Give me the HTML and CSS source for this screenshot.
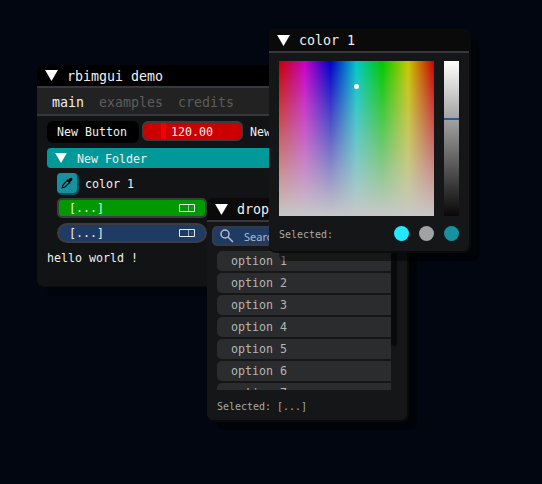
FILE: index.html
```html
<!DOCTYPE html>
<html lang="en">
<head>
<meta charset="utf-8">
<title>rbimgui demo</title>
<link rel="stylesheet" href="styles.css">
</head>
<body>
<main class="desktop">
  <section class="window demo">
    <header class="title"><svg class="arrow" viewBox="0 0 14 12"><path d="M0 0H14L7 12Z"/></svg><span>rbimgui demo</span></header>
    <nav class="tabs"><span class="active">main</span><span>examples</span><span>credits</span></nav>
    <div class="content">
      <div class="controls">
        <div class="button">New Button</div>
        <div class="slider"><i class="grip"></i><span>120.00</span></div>
        <span class="label">New</span>
      </div>
      <div class="folder"><svg class="arrow" viewBox="0 0 14 12"><path d="M0 0H14L7 12Z"/></svg><span>New Folder</span></div>
      <div class="items">
        <div class="color-row">
          <div class="swatch"><svg viewBox="0 0 12 12"><path d="M1.2 10.8 2 8 6.4 3.4 8.6 5.6 4 10Z" fill="none" stroke="#000" stroke-width="1.1"/><path d="M5.4 3.3 6.3 2.5 7 3.1 8.7 1.3Q10 .3 11.1 1.1 11.9 2.2 10.8 3.5L8.9 5.2 9.5 5.9 8.7 6.7Z"/></svg></div>
          <span>color 1</span>
        </div>
        <div class="combo green"><span>[...]</span><svg viewBox="0 0 16 8"><path d="M.5 .5H15.5V7.5H.5Z"/><path class="split" d="M9.5 1V7"/><path class="dot" d="M12.5 4H13.5"/></svg></div>
        <div class="combo blue"><span>[...]</span><svg viewBox="0 0 16 8"><path d="M.5 .5H15.5V7.5H.5Z"/><path class="split" d="M9.5 1V7"/><path class="dot" d="M12.5 4H13.5"/></svg></div>
      </div>
      <div class="hello">hello world !</div>
    </div>
  </section>

  <section class="window drop">
    <header class="title"><svg class="arrow" viewBox="0 0 14 12"><path d="M0 0H14L7 12Z"/></svg><span>drop</span></header>
    <div class="search"><svg viewBox="0 0 14 14"><circle cx="5" cy="5" r="4"/><path d="M8 8 13 13"/></svg><span>Search</span></div>
    <div class="list">
      <div class="options">
        <div class="option">option 1</div>
        <div class="option">option 2</div>
        <div class="option">option 3</div>
        <div class="option">option 4</div>
        <div class="option">option 5</div>
        <div class="option">option 6</div>
        <div class="option">option 7</div>
      </div>
      <div class="scroll"></div>
    </div>
    <div class="selected">Selected: [...]</div>
  </section>

  <section class="window picker">
    <header class="title"><svg class="arrow" viewBox="0 0 14 12"><path d="M0 0H14L7 12Z"/></svg><span>color 1</span></header>
    <div class="fields">
      <div class="spectrum"><i class="point"></i></div>
      <div class="value"><i class="mark"></i></div>
    </div>
    <footer class="result"><span>Selected:</span><div class="dots"><i class="cyan"></i><i class="gray"></i><i class="teal"></i></div></footer>
  </section>
</main>
</body>
</html>
```
FILE: styles.css
```css
* { box-sizing: border-box; }
body {
  margin: 0;
  background: #010611;
  color: #f0f0f0;
  font: 11.63px/20px "DejaVu Sans Mono", monospace;
}
.desktop { position: relative; width: 542px; height: 484px; overflow: hidden; white-space: nowrap; }
.window {
  position: absolute;
  width: 200px;
  height: 222px;
  border-radius: 6px;
  background: #151617;
  box-shadow: 1px 1px 0 1px rgba(10, 11, 11, .9), 10px 10px 0 rgba(0, 0, 0, .48);
}
.demo { left: 37px; top: 65px; width: 300px; height: 221px; background: #121314; box-shadow: 0 1px 0 #0b0c0d, 10px 10px 0 rgba(0, 0, 0, .3); }
.drop { left: 207px; top: 198px; }
.picker { left: 269px; top: 29px; }
.title {
  display: flex;
  align-items: center;
  gap: 9px;
  height: 24px;
  padding-left: 8px;
  border-bottom: 2px solid #37373d;
  border-radius: 6px 6px 0 0;
  background: #0a0a0a;
  font-size: 13.29px;
}
.title span { padding-top: 2px; }
.demo .title { height: 23px; background: #000; }
.arrow { width: 13px; height: 11px; fill: #fff; flex: none; }
.tabs {
  display: flex;
  align-items: center;
  gap: 15px;
  height: 28px;
  padding: 3px 0 0 15px;
  border-bottom: 2px solid #37373d;
  background: #222223;
  color: #5d5d5d;
  font-size: 13.29px;
}
.tabs .active { color: #f0f0f0; }
.content { padding: 5px 0 0 10px; }
.controls { display: flex; gap: 2px; height: 22px; }
.button { width: 92px; height: 22px; padding-left: 10px; border-radius: 6px; background: #000; line-height: 22px; }
.slider { display: flex; width: 101px; height: 20px; margin-left: 1px; border: 2px solid #3c3c42; border-radius: 6px; background: #cc0000; line-height: 19px; }
.grip { width: 5px; height: 16px; margin-left: 17px; background: #f40000; }
.slider span { margin-left: 5px; }
.label { margin-left: 5px; line-height: 22px; }
.folder { display: flex; align-items: center; gap: 10px; height: 20px; margin-top: 5px; padding: 1px 0 0 8px; border-radius: 4px; background: #009999; }
.folder .arrow { width: 12px; height: 10px; margin-top: -1px; }
.items { padding: 5px 0 0 10px; }
.color-row { display: flex; gap: 8px; height: 25px; line-height: 22px; }
.swatch { width: 20px; height: 20px; padding: 4px; border-radius: 4px; background: #17919f; box-shadow: 1px 1px 0 1px #0d525a; line-height: 0; }
.swatch svg { width: 12px; height: 12px; }
.combo { display: flex; align-items: center; justify-content: space-between; width: 150px; height: 20px; margin-bottom: 5px; padding: 0 10px; border: 2px solid #3c3c42; border-radius: 5px; }
.combo svg { width: 16px; height: 8px; fill: none; stroke: #e5eaf0; stroke-width: 1; }
.combo .split { stroke-opacity: .65; }
.combo .dot { stroke-opacity: .5; }
.green { background: #009900; }
.blue { border-radius: 10px; background: #203b63; }
.hello { height: 20px; }
.search { display: flex; align-items: center; gap: 10px; width: 190px; height: 20px; margin: 4px 0 0 5px; padding-left: 6px; border: 2px solid #343a48; border-radius: 5px; background: #203b63; color: #aeb8c7; font: 11px/20px "Noto Sans", sans-serif; }
.search span { padding-top: 2px; }
.search svg { width: 14px; height: 14px; fill: none; stroke: #b3bdcc; stroke-width: 1.5; }
.list { display: flex; height: 140px; margin: 4px 0 0 10px; overflow: hidden; }
.options { width: 174px; }
.option { height: 20px; margin: 1px 0 2px; padding-left: 14px; border-radius: 5px 0 0 5px; background: #2b2c2d; color: #b5b5b5; line-height: 20px; }
.option + .option { margin-top: 0; }
.scroll { width: 6px; height: 96px; border-radius: 0 0 3px 3px; background: #090a0a; }
.selected { padding: 7px 0 0 10px; color: #a9a9a9; font-size: 9.97px; }
.fields { display: flex; gap: 10px; padding: 8px 0 0 10px; }
.spectrum { position: relative; width: 155px; height: 155px; background: linear-gradient(transparent, #c8c8c8), linear-gradient(90deg, #c80000, #c800c8, #0000c8, #00c8c8, #00c800, #c8c800, #c80000); }
.point { position: absolute; left: 75px; top: 23px; width: 5px; height: 5px; border-radius: 50%; background: #fff; }
.value { position: relative; width: 15px; height: 155px; background: linear-gradient(#fff, #080808); }
.mark { position: absolute; left: 0; top: 57px; width: 15px; height: 2px; background: #325693; }
.result { display: flex; align-items: center; justify-content: space-between; height: 15px; margin-top: 10px; padding: 0 10px; color: #a9a9a9; font-size: 9.97px; }
.result span { padding-top: 2px; }
.dots { display: flex; gap: 10px; }
.dots i { width: 15px; height: 15px; border-radius: 50%; }
.cyan { background: #25e8ff; }
.gray { background: #a2a2a2; }
.teal { background: #17919f; }
```
